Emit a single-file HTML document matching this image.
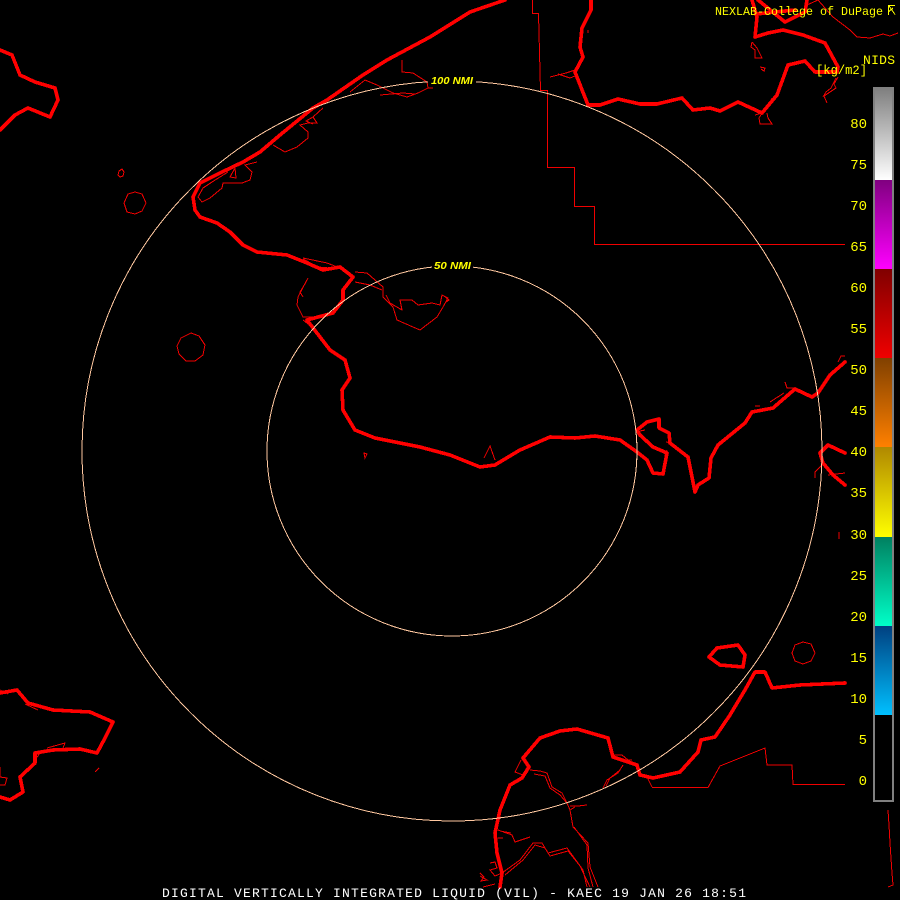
<!DOCTYPE html>
<html><head><meta charset="utf-8"><style>
html,body{margin:0;padding:0;background:#000;width:900px;height:900px;overflow:hidden}
svg{display:block;position:absolute;left:0;top:0}
.th{fill:none;stroke:#f00;stroke-width:3.6;stroke-linejoin:round;stroke-linecap:round;shape-rendering:crispEdges}
.tn{fill:none;stroke:#f00000;stroke-width:1;shape-rendering:crispEdges}
.m{font-family:"Liberation Mono",monospace;fill:#ff0}
.n{font-family:"Liberation Sans",sans-serif;font-weight:bold;font-style:italic;font-size:10px;fill:#ff0}
</style></head><body>
<svg width="900" height="900" viewBox="0 0 900 900" xmlns="http://www.w3.org/2000/svg">
<defs>
<linearGradient id="g1" x1="0" y1="0" x2="0" y2="1"><stop offset="0" stop-color="#808080"/><stop offset="1" stop-color="#fff"/></linearGradient>
<linearGradient id="g2" x1="0" y1="0" x2="0" y2="1"><stop offset="0" stop-color="#800080"/><stop offset="1" stop-color="#f0f"/></linearGradient>
<linearGradient id="g3" x1="0" y1="0" x2="0" y2="1"><stop offset="0" stop-color="#800000"/><stop offset="1" stop-color="#f00000"/></linearGradient>
<linearGradient id="g4" x1="0" y1="0" x2="0" y2="1"><stop offset="0" stop-color="#804000"/><stop offset="1" stop-color="#ff8000"/></linearGradient>
<linearGradient id="g5" x1="0" y1="0" x2="0" y2="1"><stop offset="0" stop-color="#b08800"/><stop offset="1" stop-color="#ffff00"/></linearGradient>
<linearGradient id="g6" x1="0" y1="0" x2="0" y2="1"><stop offset="0" stop-color="#008060"/><stop offset="1" stop-color="#00ffc8"/></linearGradient>
<linearGradient id="g7" x1="0" y1="0" x2="0" y2="1"><stop offset="0" stop-color="#004080"/><stop offset="1" stop-color="#00c0ff"/></linearGradient>
</defs>
<rect width="900" height="900" fill="#000"/>

<!-- thin outlines -->
<g class="tn">
<path d="M532.500 0V13.500H538.500L540.500 90.500H547.500V167.500H574.500V206.500H594.500V244.500H845"/>
<path d="M652 787.500H708L720 766L730 762L765 748L767 765H792L793 784.500H845"/>
<path d="M647 777L652 787"/>
<path d="M550 77L566 73L575 70M558 74L570 78L575 76"/>
<path d="M588 30V33"/>
<path d="M807 5L818 0M818 0L825 8L833 17L850 30L857 37L870 38L883 34L890 36L898 33"/>
<path d="M752 42L751 47L755 50L755 58H762L757 48L752 42M760 67L765 68L764 71L761 69"/>
<path d="M838 77L834 84L836 88L824 96L827 103M836 78L831 88L826 92L823 97"/>
<path d="M762 113L759 118L760 124H772L768 118L767 113M762 113L755 115M772 98L766 110"/>
<path d="M402 60V72L413 73L427 82L428 88L418 93L407 97L393 93L377 85L365 80L350 92"/>
<path d="M380 95L403 93L415 94M428 88L433 88"/>
<path d="M323 108L313 117L317 123L308 123L300 125L308 132L308 138L297 147L285 152L273 145M313 117L306 121L313 124"/>
<path d="M257 162L245 165L252 172L250 180L242 183L223 183L222 188L210 198L202 202L198 197L203 188L212 182L228 172M235 168L230 177L236 178L235 168"/>
<path d="M303 258L327 263L340 268M303 259L318 267L330 268"/>
<path d="M355 272L367 273L383 287V297L393 307L397 320L413 327L420 330L437 317L443 307L448 298L442 295L440 305L432 303L418 305L412 300L400 300L402 310L390 303L386 295"/>
<path d="M355 282L370 285L382 290M444 296L449 300L446 302"/>
<path d="M308 278L298 297L297 305L303 317L323 317L337 310M306 282L300 292L303 297"/>
<path d="M303 320L316 330"/>
<path d="M530 770L540 771L547 773L552 787L562 793L567 803L570 810L573 827L588 843L590 867L598 887M534 774L545 776L550 788L560 795L566 802M574 827L587 845L588 868L593 887"/>
<path d="M570 806L578 806L587 805M570 810L575 807"/>
<path d="M603 788L607 780L618 773L623 765M606 786L610 778L620 770"/>
<path d="M613 755L622 755L628 760L632 760"/>
<path d="M498 830L512 835L515 842L530 837M498 838H503M500 831L511 833"/>
<path d="M502 873L520 860L533 843H542L548 853L567 848L583 870L587 887M505 875L523 860L535 845L545 848L550 856L568 851L580 866L590 887"/>
<path d="M490 863L495 862L497 868L490 870L495 876L502 873M480 873L484 877L481 881L487 880L480 876M483 887L495 884"/>
<path d="M518 766L515 772L523 775M521 760L517 768"/>
<path d="M0 767V777L7 778L5 785H0M95 772L99 768M47 748L65 743L63 748M35 760L40 753"/>
<path d="M25 704L38 710M0 690L8 694"/>
<path d="M820 455L822 465L815 472V478M828 475L845 473"/>
<path d="M785 382L787 388L792 388L798 389M755 406L760 406M770 402L784 393M838 362L841 356H845"/>
<path d="M666 442L672 443L676 446M665 455L667 450M640 431L645 430M484 458L490 446L495 460"/>
<path d="M888 810L889 825L890 843L892 873L893 885L888 887"/>
<path d="M135 192L142 194L146 203L142 211L135 214L127 212L124 203L128 194Z"/>
<path d="M191 333L199 336L205 345L203 355L195 361L186 361L179 354L177 346L181 338Z"/>
<path d="M803 642L811 644L815 653L811 661L803 664L795 661L792 653L795 645Z"/>
<path d="M119 171L122 169L124 172L123 176L120 177L118 175Z"/>
<path d="M364 453L367 454L365 458Z"/>
<path d="M839 532V539"/>
</g>

<!-- thick coast -->
<g class="th">
<path d="M505 0L470 12L430 37L387 60L363 75L327 100L313 108L280 135L260 152L243 162L220 173L200 183L193 197L195 210L200 217L217 223L230 232L243 245L257 252L287 255L307 263L323 270L340 267L353 277L343 290V300L333 313L307 320L320 337L330 350L345 360L350 378L342 390L343 410L355 430L375 438L420 447L450 455L480 467L495 465L520 450L550 437L575 438L595 436L620 440L637 452L647 460L653 473L663 474L667 453L653 447L640 435L637 430L647 422L659 419V428L669 433L670 443L688 457L695 492L698 485L709 478L711 458L718 445L745 423L752 412L773 408L795 389L812 397L818 393L830 375L845 362"/>
<path d="M820 453L828 445L845 453M820 453L823 463L833 475L845 485"/>
<path d="M591 0V10L582 28L580 47L583 57L575 72L588 105H600L618 99L640 104H657L682 98L693 110L710 108L720 111L738 102L762 113L777 95L788 65L805 61L815 72H837L838 67L825 43L803 35L783 30L768 33L755 37L757 17L752 0"/>
<path d="M758 0L785 22L805 12L807 0M756 14L795 10"/>
<path d="M0 50L12 55L20 75L35 82L55 88L58 100L50 117L28 108L15 115L0 130"/>
<path d="M0 693L17 690L28 703L53 710L90 712L113 722L105 738L97 753L80 749L53 750L35 753V763L20 777L23 792L10 800L0 797"/>
<path d="M500 887L502 873L497 853L495 833L500 810L510 785L522 778L529 767L523 758L540 738L560 731L577 729L608 738L613 757L637 765L640 775L653 778L680 772L698 752L701 740L715 737L730 715L745 690L755 672L765 672L772 688L800 685L845 683"/>
<path d="M717 648L709 657L720 665L743 667L745 655L738 645Z"/>
</g>

<!-- range rings -->
<circle cx="452" cy="451" r="370" fill="none" stroke="#ffc8a0" stroke-width="1" shape-rendering="crispEdges"/>
<circle cx="452" cy="451" r="185" fill="none" stroke="#ffc8a0" stroke-width="1" shape-rendering="crispEdges"/>
<rect x="428" y="75" width="48" height="11" fill="#000"/>
<rect x="432" y="260" width="41" height="11" fill="#000"/>
<text x="431" y="84" class="n" textLength="42" lengthAdjust="spacingAndGlyphs">100 NMI</text>
<text x="434" y="269" class="n" textLength="37" lengthAdjust="spacingAndGlyphs">50 NMI</text>

<!-- color bar -->
<rect x="874" y="88" width="19" height="713" fill="#000" stroke="#808080" stroke-width="2"/>
<rect x="875" y="89" width="17" height="91" fill="url(#g1)"/>
<rect x="875" y="180" width="17" height="89" fill="url(#g2)"/>
<rect x="875" y="269" width="17" height="89" fill="url(#g3)"/>
<rect x="875" y="358" width="17" height="89" fill="url(#g4)"/>
<rect x="875" y="447" width="17" height="90" fill="url(#g5)"/>
<rect x="875" y="537" width="17" height="89" fill="url(#g6)"/>
<rect x="875" y="626" width="17" height="89" fill="url(#g7)"/>

<g class="m" font-size="14" text-anchor="end">
<text x="867" y="128">80</text><text x="867" y="169">75</text><text x="867" y="210">70</text><text x="867" y="251">65</text>
<text x="867" y="292">60</text><text x="867" y="333">55</text><text x="867" y="374">50</text><text x="867" y="415">45</text>
<text x="867" y="456">40</text><text x="867" y="497">35</text><text x="867" y="539">30</text><text x="867" y="580">25</text>
<text x="867" y="621">20</text><text x="867" y="662">15</text><text x="867" y="703">10</text><text x="867" y="744">5</text>
<text x="867" y="785">0</text>
</g>

<text x="715" y="15" class="m" font-size="12" textLength="168" lengthAdjust="spacingAndGlyphs">NEXLAB-College of DuPage</text>
<path d="M895 5.500H888.500V15M889 6L895 14.500M889 11.500L893 8" fill="none" stroke="#ff0" stroke-width="1" shape-rendering="crispEdges"/>
<text x="863" y="64" class="m" font-size="13" textLength="32">NIDS</text>
<text x="816" y="74" class="m" font-size="12.500" textLength="51" lengthAdjust="spacingAndGlyphs">[kg/m2]</text>
<text x="162" y="897" font-family="'Liberation Mono',monospace" font-size="13" fill="#fff" textLength="584">DIGITAL VERTICALLY INTEGRATED LIQUID (VIL) - KAEC 19 JAN 26 18:51</text>
</svg>
</body></html>
